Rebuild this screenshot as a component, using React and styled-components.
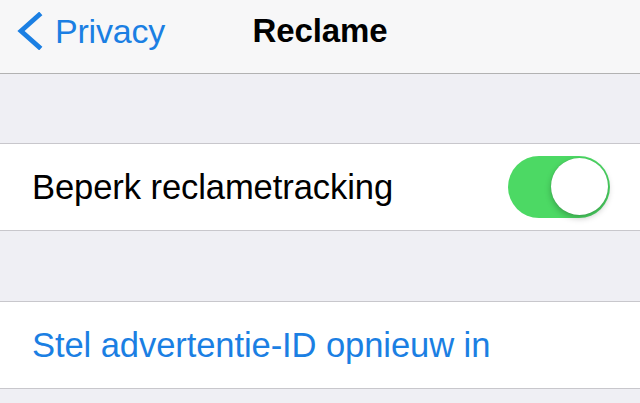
import React from "react";
import styled, { createGlobalStyle } from "styled-components";

const Global = createGlobalStyle`
  html, body { margin: 0; padding: 0; background: #efeff4; }
  body { font-family: "Liberation Sans", Arial, sans-serif; -webkit-font-smoothing: antialiased; }
`;

const Page = styled.div`
  width: 640px;
  height: 403px;
  overflow: hidden;
  background: #efeff4;
  display: flex;
  flex-direction: column;
`;

const NavBar = styled.header`
  height: 74px;
  box-sizing: border-box;
  background: #f7f7f8;
  border-bottom: 1px solid #b2b2b2;
  display: grid;
  grid-template-columns: 1fr auto 1fr;
  align-items: center;
  padding: 0 17px 11px 17px;
`;

const BackButton = styled.div`
  display: flex;
  align-items: center;
  gap: 12px;
  color: #1b7fe3;
  font-size: 34px;
  letter-spacing: -0.2px;
`;

const Title = styled.h1`
  margin: 0;
  font-size: 33px;
  font-weight: 700;
  color: #000;
  letter-spacing: -0.1px;
`;

const Spacer = styled.div`
  height: ${(p) => p.$h}px;
`;

const Group = styled.section`
  background: #fff;
  border-top: 1px solid #c8c7cc;
  border-bottom: 1px solid #c8c7cc;
`;

const Row = styled.div`
  height: 86px;
  display: flex;
  align-items: center;
  justify-content: space-between;
  padding: 0 30px 0 32px;
`;

const Label = styled.span`
  font-size: 34.6px;
  color: ${(p) => (p.$link ? "#1b7fe3" : "#000")};
  letter-spacing: -0.1px;
`;

const Toggle = styled.div`
  width: 102px;
  height: 62px;
  border-radius: 31px;
  background: #4cd964;
  position: relative;
  flex-shrink: 0;
`;

const Knob = styled.div`
  position: absolute;
  right: 2px;
  top: 2px;
  width: 57px;
  height: 57px;
  border-radius: 50%;
  background: #fff;
  box-shadow: 0 3px 6px rgba(0, 0, 0, 0.25), 0 0 1px rgba(0, 0, 0, 0.2);
`;

const Chevron = () => (
  <svg width="26" height="38" viewBox="0 0 26 38">
    <path d="M22 3 L4 19 L22 35" fill="none" stroke="#1b7fe3" strokeWidth="4.8" strokeLinecap="square" strokeLinejoin="miter" />
  </svg>
);

export default function App() {
  return (
    <>
      <Global />
      <Page>
        <NavBar>
          <BackButton>
            <Chevron />
            <span>Privacy</span>
          </BackButton>
          <Title>Reclame</Title>
          <div />
        </NavBar>
        <Spacer $h={69} />
        <Group>
          <Row>
            <Label>Beperk reclametracking</Label>
            <Toggle>
              <Knob />
            </Toggle>
          </Row>
        </Group>
        <Spacer $h={70} />
        <Group>
          <Row>
            <Label $link>Stel advertentie-ID opnieuw in</Label>
          </Row>
        </Group>
      </Page>
    </>
  );
}
